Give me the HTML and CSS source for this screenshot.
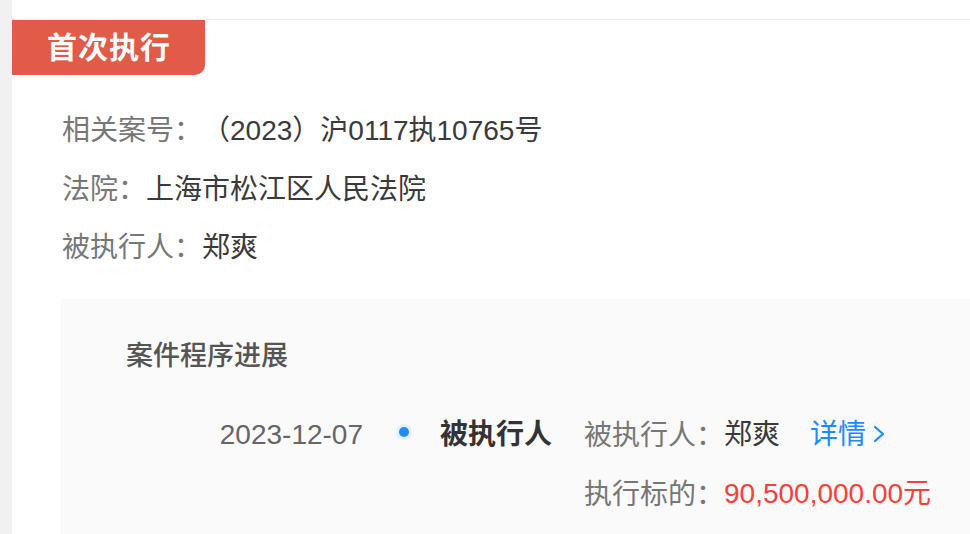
FILE: index.html
```html
<!DOCTYPE html>
<html lang="zh-CN">
<head>
    <meta charset="UTF-8">
    <meta name="viewport" content="width=device-width, initial-scale=1.0">
    <title>首次执行</title>
    <link rel="stylesheet" href="styles.css">
</head>
<body>
    <div class="page">
        <div class="side"></div>
        <div class="card">
            <div class="tab">首次执行</div>

            <div class="info">
                <div class="info-row"><span class="label">相关案号</span><span class="value">（2023）沪0117执10765号</span></div>
                <div class="info-row"><span class="label">法院</span><span class="value">上海市松江区人民法院</span></div>
                <div class="info-row"><span class="label">被执行人</span><span class="value">郑爽</span></div>
            </div>

            <div class="progress">
                <h2 class="progress-title">案件程序进展</h2>
                <div class="step">
                    <div class="step-date">2023-12-07</div>
                    <div class="step-dot"></div>
                    <div class="step-name">被执行人</div>
                    <div class="step-detail">
                        <div class="detail-row">
                            <span class="label">被执行人</span><span class="value">郑爽</span>
                            <a class="more" href="#">详情<svg width="16" height="22" viewBox="0 0 16 22"><polyline points="4,4 12,11 4,18" fill="none" stroke="#1a8cff" stroke-width="2.2" stroke-linecap="round" stroke-linejoin="round"/></svg></a>
                        </div>
                        <div class="detail-row">
                            <span class="label">执行标的</span><span class="amount">90,500,000.00元</span>
                        </div>
                    </div>
                </div>
            </div>
        </div>
    </div>
</body>
</html>
```

FILE: styles.css
```css
html, body {
    margin: 0;
    height: 100%;
}

body {
    font-family: "Liberation Sans", "Noto Sans CJK SC", sans-serif;
    font-size: 28px;
    color: #333;
    background-color: #fff;
    overflow: hidden;
    text-spacing-trim: space-all;
}

.page {
    display: flex;
    height: 100%;
}

.side {
    width: 12px;
    flex-shrink: 0;
    background-color: #f1f1f1;
}

.card {
    flex: 1;
    margin-top: 19px;
    border-top: 1px solid #ececec;
    background-color: #fff;
    display: flex;
    flex-direction: column;
}

.tab {
    align-self: flex-start;
    width: 158px;
    height: 55px;
    line-height: 55px;
    padding-left: 35px;
    background-color: #e15b48;
    color: #fff;
    font-size: 30px;
    font-weight: bold;
    letter-spacing: 1px;
    border-bottom-right-radius: 10px;
}

.info {
    padding: 24px 0 0 50px;
}

.info-row {
    height: 58.5px;
    line-height: 58.5px;
}

.label {
    color: #777;
}

.label::after {
    content: "：";
    font-family: "Noto Sans CJK TC", sans-serif;
}

.value {
    color: #3a3a3a;
}

.progress {
    flex: 1;
    margin: 24px 0 0 48px;
    padding: 37px 0 0 66px;
    background-color: #fafafa;
}

.progress-title {
    margin: 0;
    font-size: 27px;
    font-weight: 500;
    color: #555;
    line-height: 40px;
}

.step {
    display: flex;
    margin-top: 29px;
}

.step-date {
    width: 237px;
    text-align: right;
    color: #666;
    line-height: 59px;
}

.step-dot {
    width: 10px;
    height: 10px;
    margin: 22px 31px 0 36px;
    border-radius: 50%;
    background-color: #1e8cfa;
    box-shadow: 0 0 0 3px #e3f0fd;
}

.step-name {
    width: 144px;
    font-weight: bold;
    color: #333;
    line-height: 59px;
}

.detail-row {
    height: 59px;
    line-height: 59px;
    display: flex;
    align-items: center;
}

.more {
    display: flex;
    align-items: center;
    margin-left: 30px;
    color: #1a8cff;
    text-decoration: none;
}

.more svg {
    margin-left: 5px;
}

.amount {
    color: #f5413a;
}
```
